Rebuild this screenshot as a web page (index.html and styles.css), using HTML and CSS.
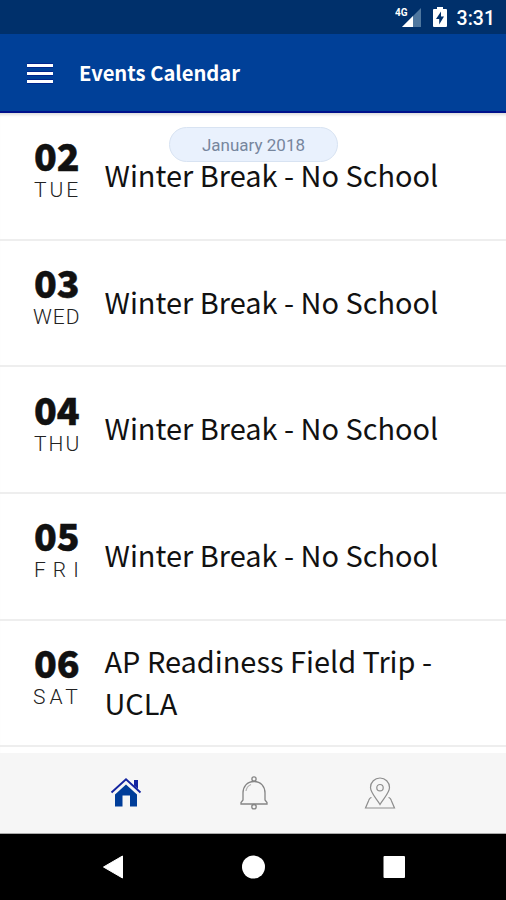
FILE: index.html
```html
<!DOCTYPE html>
<html lang="en">
<head>
<meta charset="utf-8">
<title>Events Calendar</title>
<link rel="stylesheet" href="styles.css">
</head>
<body>
<div class="screen">
  <div class="status">
    <svg class="signal" width="28" height="22" viewBox="0 0 28 22">
      <path d="M26 2V21H7z" fill="#4f779f"/>
      <path d="M18 10V21H7z" fill="#fff"/>
      <text x="0" y="10" class="network">4G</text>
    </svg>
    <svg class="battery" width="14" height="22" viewBox="0 0 14 22">
      <path d="M4 1h6v2h3a1 1 0 0 1 1 1v16a1 1 0 0 1-1 1H1a1 1 0 0 1-1-1V4a1 1 0 0 1 1-1h3z" fill="#fff"/>
      <path d="M8 5.5L3 13h3.2v5.5L11 10.5H8z" fill="#00306b"/>
    </svg>
    <span class="time">3:31</span>
  </div>
  <header class="bar">
    <svg width="28" height="22" viewBox="0 0 28 22">
      <path d="M1 3.500h26M1 11.500h26M1 19.500h26" stroke="#000f85" stroke-width="5" opacity=".55"/>
      <path d="M1 3.500h26M1 11.500h26M1 19.500h26" stroke="#fff" stroke-width="3"/>
    </svg>
    <h1>Events Calendar</h1>
  </header>
  <main class="events">
    <div class="month">January 2018</div>
    <article class="event"><div class="date"><b>02</b><span class="day tue">TUE</span></div><p>Winter Break - No School</p></article>
    <article class="event"><div class="date"><b>03</b><span class="day wed">WED</span></div><p>Winter Break - No School</p></article>
    <article class="event"><div class="date"><b>04</b><span class="day thu">THU</span></div><p>Winter Break - No School</p></article>
    <article class="event"><div class="date"><b>05</b><span class="day fri">FRI</span></div><p>Winter Break - No School</p></article>
    <article class="event"><div class="date"><b>06</b><span class="day sat">SAT</span></div><p>AP Readiness Field Trip - UCLA</p></article>
  </main>
  <nav class="tabs">
    <svg width="32" height="30" viewBox="0 0 32 30" fill="#003d99">
      <path d="M16 6.4L27 16.500V28.500H20V17.500H12.500V28.500H5V16.500z"/>
      <path d="M1.500 14.500L16 1.400 30.500 14.500" fill="none" stroke="#1425a0" stroke-width="1.900"/>
      <path d="M24 2h4v9l-4-3.600z" fill="#1425a0"/>
    </svg>
    <svg class="bell" width="30" height="36" viewBox="0 0 30 36" fill="none" stroke="#858585" stroke-width="1.300">
      <circle cx="15" cy="4" r="2.100"/>
      <path d="M15 6.500C8 6.500 4 11.500 4 18V25L2 27.500V29H28V27.500L26 25V18C26 11.500 22 6.500 15 6.500z"/>
      <path d="M7 16C7.500 12.500 9.500 10.500 12 9.500" stroke="#b5b5b5"/>
      <circle cx="15" cy="31.700" r="2.200"/>
    </svg>
    <svg width="32" height="34" viewBox="0 0 32 34" fill="none" stroke="#8d8d8d" stroke-width="1.200">
      <path d="M16 28.500C13 23 6.500 17 6.500 11.500A9.500 9.500 0 0 1 25.500 11.500C25.500 17 19 23 16 28.500z"/>
      <circle cx="16" cy="11.700" r="3.200"/>
      <path d="M7.500 21.500C5.500 21.500 5 23.500 4.500 25L1.500 32H30.500L27.500 25C27 23.500 26.500 21.500 24.500 21.500"/>
    </svg>
  </nav>
  <footer class="system">
    <svg width="22" height="26" viewBox="0 0 22 26"><path d="M20.500 2V24L1.500 13z" fill="#fff" stroke="#fff" stroke-linejoin="round"/></svg>
    <svg width="24" height="24" viewBox="0 0 24 24"><circle cx="11.500" cy="12" r="11.500" fill="#fff"/></svg>
    <svg width="22" height="22" viewBox="0 0 22 22"><rect x=".5" width="21.500" height="22" rx="1" fill="#fff"/></svg>
  </footer>
</div>
</body>
</html>
```
FILE: styles.css
```css
* { box-sizing: border-box; }
body { margin: 0; }
svg { display: block; flex: none; }
.screen {
  width: 506px;
  height: 900px;
  display: flex;
  flex-direction: column;
  overflow: hidden;
  background: #fff;
  font-family: "Noto Sans CJK SC", "Noto Sans", sans-serif;
  color: #111;
}
.status {
  flex: none;
  height: 34px;
  padding: 0 11px 0 0;
  display: flex;
  align-items: center;
  justify-content: flex-end;
  background: #00306b;
  color: #fff;
}
.signal { margin-right: 10px; }
.network { font: 700 10px Roboto, sans-serif; fill: #fff; }
.battery { margin-right: 10px; }
.time { font: 500 19.500px/34px Roboto, sans-serif; padding-top: 3px; }
.bar {
  flex: none;
  height: 79px;
  padding: 0 26px;
  display: flex;
  align-items: center;
  gap: 25px;
  background: #004098;
  border-bottom: 2px solid #00118b;
  color: #fff;
}
h1 { margin: 0; font-size: 20.200px; line-height: 30px; font-weight: 700; white-space: nowrap; }
.events {
  flex: none;
  height: 640px;
  padding-top: 1px;
  position: relative;
  box-shadow: inset 0 4px 3px -2px #ddd;
}
.month {
  position: absolute;
  top: 14px;
  left: 169px;
  width: 169px;
  height: 35px;
  border: 1px solid #d8e3f2;
  border-radius: 18px;
  background: #e9f1fd;
  color: #77869d;
  text-align: center;
  font: 400 17px/35px Roboto, sans-serif;
}
.event {
  height: 126.700px;
  padding-left: 33px;
  display: flex;
  align-items: center;
  border-bottom: 2px solid #eee;
}
.date { width: 71.500px; flex: none; height: 80px; display: flex; flex-direction: column; }
.date b { font-size: 37.500px; line-height: 38px; font-weight: 900; -webkit-text-stroke: .5px #111; padding-left: 1px; }
.day { margin-top: 3px; font: 300 21px/26px Roboto, sans-serif; color: #222; white-space: nowrap; }
.event p { margin: 0 0 5px; width: 350px; font-size: 28.950px; line-height: 42px; font-weight: 400; }
.tabs {
  flex: none;
  height: 81px;
  padding: 0 110px;
  display: flex;
  align-items: center;
  justify-content: space-between;
  background: #f6f6f6;
  border-bottom: 1px solid #aaa;
}
.bell { margin-left: 2px; }
.system {
  flex: 1;
  padding: 0 101px 0 102px;
  display: flex;
  align-items: center;
  justify-content: space-between;
  background: #000;
}
.tue { letter-spacing: 3px; padding-left: 1px; }
.wed { letter-spacing: 1px; }
.thu { letter-spacing: 2px; padding-left: 1px; }
.fri { letter-spacing: 7px; padding-left: 1px; }
.sat { letter-spacing: 4px; }
```
